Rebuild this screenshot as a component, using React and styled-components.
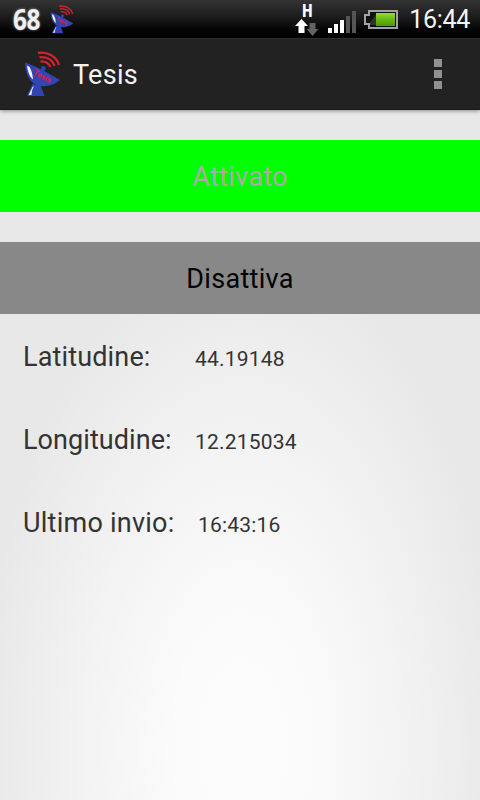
import React from "react";
import styled, { createGlobalStyle } from "styled-components";

const GlobalStyle = createGlobalStyle`
  body {
    margin: 0;
    font-family: Roboto, "Noto Sans", sans-serif;
  }
`;

const Screen = styled.div`
  display: flex;
  flex-direction: column;
  width: 480px;
  height: 800px;
  overflow: hidden;
  background: radial-gradient(
    ellipse 260px 500px at 242px 745px,
    #fcfcfc 0%,
    #fbfbfb 25%,
    #f3f3f3 60%,
    #e8e8e8 100%
  );
`;

const StatusBar = styled.div`
  display: flex;
  align-items: center;
  box-sizing: border-box;
  height: 38px;
  padding: 0 10px 0 13px;
  background: linear-gradient(#343434 0, #1c1c1c 17px, #040404 30px, #000 37px);
`;

const Level = styled.span`
  width: 37px;
  color: #f0f0f0;
  font-family: "Open Sans", Roboto, sans-serif;
  font-size: 28px;
  font-weight: 700;
  line-height: 40px;
  letter-spacing: -0.5px;
  text-shadow: 0 0 3px #999;

  span {
    display: inline-block;
    transform: scaleX(0.87);
    transform-origin: left;
  }
`;

const StatusIcons = styled.div`
  display: flex;
  align-items: flex-start;
  height: 38px;
  margin-left: auto;
`;

const DataLink = styled.div`
  display: flex;
  flex-direction: column;
  align-items: center;
  width: 24px;
  padding-top: 2px;
  color: #fff;
  font-size: 18px;
  font-weight: 900;
  line-height: 17px;

  b {
    font-weight: 900;
    transform: scaleX(0.8);
  }
`;

const Signal = styled.svg`
  margin: 10px 0 0 9px;
`;

const Battery = styled.svg`
  margin: 9px 0 0 8px;
`;

const Clock = styled.span`
  margin-left: 11px;
  color: #f5f5f5;
  font-size: 25px;
  line-height: 40px;
  letter-spacing: -0.3px;
`;

const ActionBar = styled.header`
  display: flex;
  align-items: center;
  box-sizing: border-box;
  height: 72px;
  padding: 0 38px 0 24px;
  background: #222;
  border-top: 1px solid #303030;
  border-bottom: 1px solid #1a1a1a;
  box-shadow: 0 1px 4px rgba(0, 0, 0, 0.4);
`;

const Title = styled.h1`
  margin: 0 auto 0 12px;
  padding-top: 2px;
  color: #f3f3f3;
  font-size: 27px;
  font-weight: 400;
  line-height: 36px;
  letter-spacing: 0.3px;
`;

const Overflow = styled.button`
  display: flex;
  flex-direction: column;
  gap: 3px;
  padding: 0;
  border: 0;
  background: none;

  i {
    width: 8px;
    height: 8px;
    background: #919191;
  }
`;

const Content = styled.main`
  display: flex;
  flex-direction: column;
  gap: 30px;
  padding-top: 30px;
`;

const WideButton = styled.button`
  height: 72px;
  padding: 2px 0 0;
  border: 0;
  color: ${(props) => props.$color};
  background: ${(props) => props.$background};
  font-family: inherit;
  font-size: 27px;
  line-height: 36px;
  letter-spacing: 0.3px;
`;

const Fields = styled.div`
  display: flex;
  flex-direction: column;
  gap: 47px;
  margin-top: -5px;
  padding-left: 23px;
  color: #333;
`;

const Field = styled.div`
  display: flex;
  align-items: baseline;
  height: 36px;
`;

const Label = styled.span`
  width: ${(props) => props.$width}px;
  font-size: 27px;
  line-height: 36px;
  letter-spacing: ${(props) => props.$spacing}px;
  white-space: nowrap;
`;

const Value = styled.span`
  font-size: 21px;
  letter-spacing: 0.2px;
`;

const fields = [
  { label: "Latitudine:", value: "44.19148", width: 172, spacing: 0.15 },
  { label: "Longitudine:", value: "12.215034", width: 172, spacing: 0.07 },
  { label: "Ultimo invio:", value: "16:43:16", width: 175, spacing: 0.25 },
];

function DishIcon({ width, height }) {
  return (
    <svg width={width} height={height} viewBox="0 0 37 46" preserveAspectRatio="none">
      <g fill="none" stroke="#d3222c" strokeWidth="2.3">
        <path d="M14 2C24 0.5 32.5 5.5 35 14" />
        <path d="M15.5 6.2C23 5.5 28.5 9 30.5 15" />
        <path d="M16.5 10.5C21.5 10.2 24.500 12 26.5 16" />
      </g>
      <path d="M8.5 33L3 45H20.5L16.500 34Z" fill="#3243b4" />
      <path d="M8.5 36L4.500 44H7.500Q7.500 39 10 35Z" fill="#d9e9ff" />
      <path d="M19.5 24L19 17" stroke="#3243b4" strokeWidth="2" />
      <circle cx="19.3" cy="17.3" r="2.3" fill="#3243b4" />
      <path
        d="M1 11.5C7 13.5 14 16.5 21 20.500C27 24 32 27 36 29C29 34.5 22 36.500 14 34.5C6 32 1 22.5 1 11.5Z"
        fill="#3444b5"
      />
      <path d="M3 14.500C3.5 20 5.5 25.5 9 28.500C8.500 24 8 20 5.5 16Z" fill="#f0f7ff" />
      <text
        x="8.500"
        y="23"
        fill="#dc1f3c"
        fontFamily="Roboto, sans-serif"
        fontSize="8"
        fontWeight="700"
        transform="rotate(29 8.500 23)"
      >
        Tesis
      </text>
    </svg>
  );
}

export default function App() {
  return (
    <>
      <GlobalStyle />
      <Screen>
        <StatusBar>
          <Level>
            <span>68</span>
          </Level>
          <DishIcon width={24} height={29} />
          <StatusIcons>
            <DataLink>
              <b>H</b>
              <svg width="24" height="17" viewBox="0 0 24 17">
                <path d="M6.5 0L13 7H9.5V14H3.5V7H0Z" fill="#fff" />
                <path d="M17.5 17L11.5 10H14.5V4H20.5V10H23.5Z" fill="#636363" />
              </svg>
            </DataLink>
            <Signal width="28" height="24">
              <path d="M0 18h4v5H0zM6 14h4v9H6zM12 10h4v13h-4z" fill="#fff" />
              <path d="M18 6h4v17h-4zM24 1h4v22h-4z" fill="#555" />
            </Signal>
            <Battery width="34" height="21">
              <defs>
                <linearGradient id="charge" x1="0" y1="0" x2="0" y2="1">
                  <stop offset="0" stopColor="#9cd83f" />
                  <stop offset="0.45" stopColor="#6abc12" />
                  <stop offset="1" stopColor="#4a9a04" />
                </linearGradient>
              </defs>
              <path d="M5 2H33V19H5V15H1V6H5Z" fill="#101010" stroke="#a3a3a3" strokeWidth="2" />
              <path d="M6 13L12 6V16H6Z" fill="#333" />
              <rect x="12" y="4" width="19" height="13" fill="url(#charge)" />
            </Battery>
            <Clock>16:44</Clock>
          </StatusIcons>
        </StatusBar>
        <ActionBar>
          <DishIcon width={37} height={46} />
          <Title>Tesis</Title>
          <Overflow aria-label="Menu">
            <i />
            <i />
            <i />
          </Overflow>
        </ActionBar>
        <Content>
          <WideButton $color="#aaa" $background="#00ff00">
            Attivato
          </WideButton>
          <WideButton $color="#000" $background="#888">
            Disattiva
          </WideButton>
          <Fields>
            {fields.map((field) => (
              <Field key={field.label}>
                <Label $width={field.width} $spacing={field.spacing}>
                  {field.label}
                </Label>
                <Value>{field.value}</Value>
              </Field>
            ))}
          </Fields>
        </Content>
      </Screen>
    </>
  );
}
